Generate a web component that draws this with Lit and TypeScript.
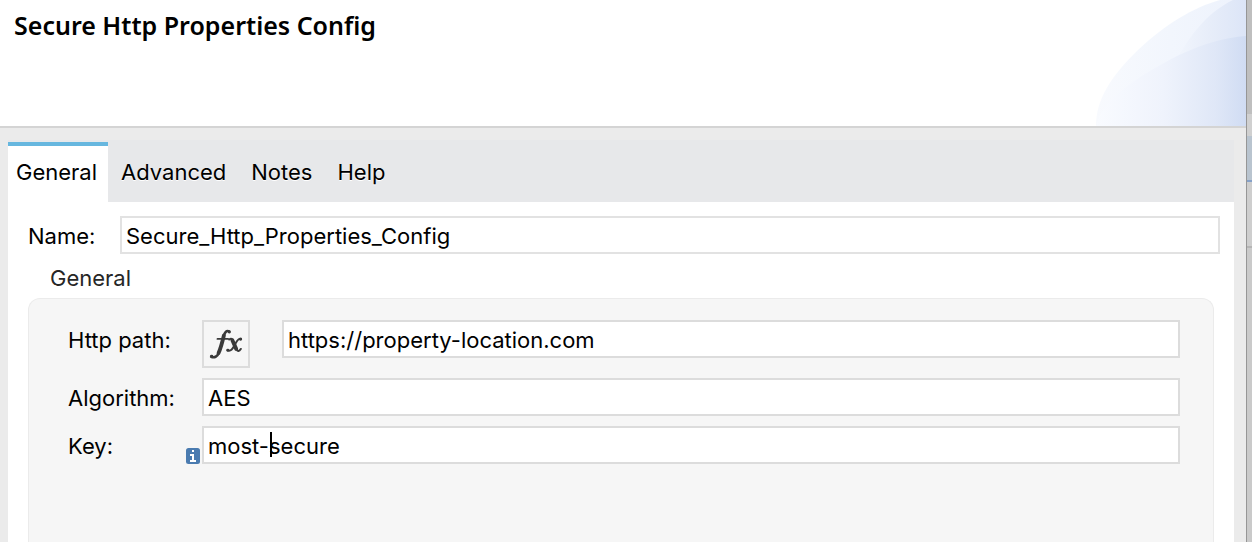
import { LitElement, html, css, svg } from "lit";
import { customElement, state } from "lit/decorators.js";

const TABS = ["General", "Advanced", "Notes", "Help"];

@customElement("header-art")
class HeaderArt extends LitElement {
  static styles = css`
    :host { display: block; flex: none; width: 150px; height: 126px; }
    .art { display: block; width: 100%; height: 100%; }
  `;

  render() {
    return html`<svg class="art" viewBox="0 0 150 126" aria-hidden="true">
      ${svg`
        <defs>
          <linearGradient id="outer" x1="0" x2="1" y1="0" y2="0">
            <stop offset="0" stop-color="#f8fafe" />
            <stop offset=".5" stop-color="#f2f6fd" />
            <stop offset="1" stop-color="#edf2fc" />
          </linearGradient>
          <linearGradient id="upper" gradientUnits="userSpaceOnUse" x1="78" x2="150" y1="0" y2="0">
            <stop offset="0" stop-color="#f2f6fd" />
            <stop offset=".5" stop-color="#e7edf9" />
            <stop offset="1" stop-color="#dce5f7" />
          </linearGradient>
          <linearGradient id="lower" x1="0" x2="1" y1="0" y2="0">
            <stop offset="0" stop-color="#f9fbff" />
            <stop offset=".45" stop-color="#eff3fc" />
            <stop offset=".8" stop-color="#dfe7f7" />
            <stop offset="1" stop-color="#d0dcf3" />
          </linearGradient>
        </defs>
        <path fill="url(#outer)" d="M0 126C0 101 13 78 42 50C68 25 98 7 124 0H150V126Z" />
        <path fill="url(#upper)" d="M78 64C92 38 110 13 137 0H150V64Z" />
        <path fill="url(#lower)" d="M0 126C3 111 16 96 37 82C68 61 108 39 150 36V126Z" />
      `}
    </svg>`;
  }
}

@customElement("app-root")
class AppRoot extends LitElement {
  @state() private active = "General";

  static styles = css`
    :host {
      display: flex;
      min-height: 100vh;
      background: #ebebeb;
      color: #000;
      font: 22px/26px Inter, "Liberation Sans", sans-serif;
      font-feature-settings: "calt" 0, "liga" 0;
    }
    * { box-sizing: border-box; }
    .dialog { flex: 1; min-width: 0; display: flex; flex-direction: column; }
    .header {
      display: flex;
      justify-content: space-between;
      background: #fff;
      border-bottom: 2px solid #d4d4d4;
    }
    .title {
      margin: 0;
      padding: 9px 14px;
      font: 650 25px/32px "Noto Sans", "Open Sans", sans-serif;
    }
    .folder {
      flex: 1;
      display: flex;
      flex-direction: column;
      margin: 12px 12px 0 8px;
      background: #fff;
    }
    .tabs { display: flex; height: 62px; padding-top: 2px; background: #e7e8ea; }
    .tab {
      border: 0;
      border-top: 4px solid transparent;
      padding: 0 12px 4px 13px;
      background: none;
      color: inherit;
      font: inherit;
      font-feature-settings: inherit;
      text-shadow: 0 1px 0 #fff;
    }
    .tab.active {
      border-color: #67b7df;
      padding: 0 11px 4px 8px;
      background: #fff;
    }
    .content { flex: 1; display: flex; flex-direction: column; padding: 14px 14px 0 20px; }
    .name-row { display: grid; grid-template-columns: 92px 1fr; line-height: 40px; }
    .field {
      width: 100%;
      min-width: 0;
      height: 38px;
      margin: 0;
      padding: 2px 4px 0;
      border: 2px solid #dcdcdc;
      border-radius: 0;
      outline: 0;
      background: #fff;
      color: #000;
      font: inherit;
      font-feature-settings: inherit;
      line-height: 26px;
    }
    .name-row .field { border-color: #e2e2e2; }
    .group { flex: 1; display: flex; flex-direction: column; margin-right: 6px; }
    .caption { margin: 0; padding: 9px 22px 7px; font: inherit; color: #262626; }
    .panel {
      flex: 1;
      display: flex;
      flex-direction: column;
      gap: 10px;
      padding: 21px 33px 21px 39px;
      border: 1px solid #ebebeb;
      border-bottom: 0;
      border-radius: 12px 12px 0 0;
      background: #f6f6f6;
    }
    .row { display: grid; grid-template-columns: 134px 1fr; align-items: start; }
    .label { display: flex; justify-content: space-between; height: 38px; line-height: 40px; }
    .with-fx { display: grid; grid-template-columns: 48px 1fr; gap: 32px; align-items: start; }
    .fx {
      display: grid;
      place-items: center;
      width: 48px;
      height: 48px;
      padding: 0;
      border: 2px solid #dcdcdc;
      background: #f6f6f6;
    }
    .info { align-self: flex-end; width: 14px; height: 16px; margin-right: 2px; }
    .editing { position: relative; }
    .caret { position: absolute; left: 68px; top: 6px; width: 2px; height: 25px; background: #000; }
    .behind {
      width: 6px;
      border-left: 1px solid #969696;
      background: linear-gradient(
        #bfbfbf 0 114px, #d0d0d0 114px 136px, #b9c4cf 136px 180px,
        #86a1c8 180px 182px, #cecece 182px 246px, #b5b5b5 246px 248px, #cacaca 248px
      );
    }
  `;

  render() {
    return html`
      <main class="dialog">
        <header class="header">
          <h1 class="title">Secure Http Properties Config</h1>
          <header-art></header-art>
        </header>
        <section class="folder">
          <div class="tabs" role="tablist">
            ${TABS.map(
              (t) => html`<button
                class="tab ${t === this.active ? "active" : ""}"
                role="tab"
                aria-selected=${t === this.active}
                @click=${() => (this.active = t)}
              >${t}</button>`
            )}
          </div>
          <div class="content">
            <div class="name-row">
              <label for="name">Name:</label>
              <input class="field" id="name" value="Secure_Http_Properties_Config" spellcheck="false" />
            </div>
            <section class="group">
              <h2 class="caption">General</h2>
              <div class="panel">
                <div class="row">
                  <label class="label" for="path">Http path:</label>
                  <div class="with-fx">
                    <button class="fx" aria-label="Expression">
                      <svg width="34" height="32" viewBox="0 0 32 30" fill="none" stroke="#3a3a3a" stroke-linecap="round" aria-hidden="true">
                        <path stroke-width="3.6" d="M14 7C12.6 13 11 19 9 23.5" />
                        <path stroke-width="2.4" d="M19 3.2C16.5 1.8 15 4 14 7M9 23.5C8 27 5 28.2 2 27" />
                        <path stroke-width="1.8" d="M8 10.2H18" />
                        <path stroke-width="3.6" d="M22 11.5L25.6 19.6" />
                        <path stroke-width="1.8" d="M19 10.8C21 9.2 22 10.5 22.6 12M26 20C27 22.4 28.4 22 30 19.6M30 10C27 9.5 26 13 24.2 16C22 20 20.5 22.2 17.5 21" />
                        <path stroke-width="2.8" d="M29.6 10.6h.2M17.6 20.8h.2M19 3.8h.2M2.4 26.4h.2" />
                      </svg>
                    </button>
                    <input class="field" id="path" value="https://property-location.com" spellcheck="false" />
                  </div>
                </div>
                <div class="row">
                  <label class="label" for="algorithm">Algorithm:</label>
                  <input class="field" id="algorithm" value="AES" />
                </div>
                <div class="row">
                  <label class="label" for="key">Key:
                    <svg class="info" viewBox="0 0 14 16" aria-hidden="true">
                      <rect width="14" height="16" rx="2.5" fill="#4a7bb0" />
                      <path fill="#fff" d="M6 2h2v2H6zM4 6h4v6h2v2H4v-2h2V8H4z" />
                    </svg>
                  </label>
                  <div class="editing">
                    <input class="field" id="key" value="most-secure" spellcheck="false" />
                    <span class="caret"></span>
                  </div>
                </div>
              </div>
            </section>
          </div>
        </section>
      </main>
      <div class="behind"></div>
    `;
  }
}
